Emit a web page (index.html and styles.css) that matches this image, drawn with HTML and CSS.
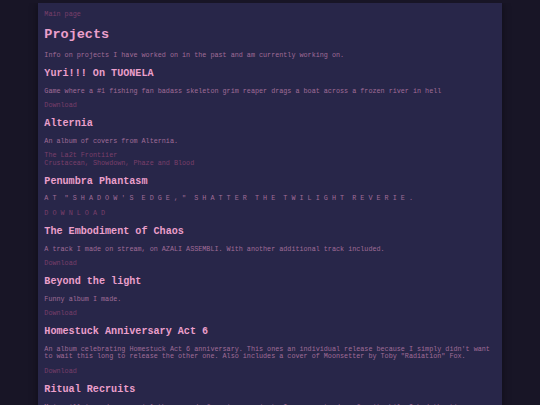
FILE: index.html
```html
<!DOCTYPE html>
<html lang="en">

<head>
    <meta charset="UTF-8">
    <meta name="viewport" content="width=device-width, initial-scale=1.0">
    <title>Projects</title>
    <link rel="stylesheet" href="styles.css">
</head>

<body>
    <main class="container">
        <a href="#">Main page</a>
        <h1>Projects</h1>
        <p>Info on projects I have worked on in the past and am currently working on.</p>

        <h2>Yuri!!! On TUONELA</h2>
        <p>Game where a #1 fishing fan badass skeleton grim reaper drags a boat across a frozen river in hell</p>
        <p><a href="#">Download</a></p>

        <h2>Alternia</h2>
        <p>An album of covers from Alternia.</p>
        <p>
            <a href="#">The La2t Frontiier</a><br>
            <a href="#">Crustacean, Showdown, Phaze and Blood</a>
        </p>

        <h2>Penumbra Phantasm</h2>
        <p class="spaced">A T  " S H A D O W ' S  E D G E , "  S H A T T E R  T H E  T W I L I G H T  R E V E R I E .</p>
        <p class="spaced"><a href="#">D O W N L O A D</a></p>

        <h2>The Embodiment of Chaos</h2>
        <p>A track I made on stream, on AZALI ASSEMBLI. With another additional track included.</p>
        <p><a href="#">Download</a></p>

        <h2>Beyond the light</h2>
        <p>Funny album I made.</p>
        <p><a href="#">Download</a></p>

        <h2>Homestuck Anniversary Act 6</h2>
        <p>An album celebrating Homestuck Act 6 anniversary. This ones an individual release because I simply didn't want to wait this long to release the other one. Also includes a cover of Moonsetter by Toby "Radiation" Fox.</p>
        <p><a href="#">Download</a></p>

        <h2>Ritual Recruits</h2>
        <p>Main villain and commercial themes made for given project. Improvements done for it while I had the time.</p>
    </main>
</body>

</html>
```

FILE: styles.css
```css
html {
    height: 100%;
    overflow: hidden;
    font-size: 6.75px;
}

body {
    margin: 3.375px 0 0;
    background-color: #181526;
    color: #a06c97;
    font-family: "Liberation Mono", "Courier New", monospace;
    font-size: 1rem;
    line-height: 7.6px;
}

.container {
    box-sizing: border-box;
    width: 464px;
    margin: 0 auto;
    padding: 7.4px 6.33px;
    background-color: #282649;
    box-shadow: 0 0 8px rgba(0, 0, 0, 0.4);
}

h1,
h2 {
    color: #eb9fcb;
    line-height: 1.13;
}

h1 {
    margin: 9.05px 0;
    font-size: 2rem;
}

h2 {
    margin: 8.4px 0;
    font-size: 1.5rem;
}

p {
    margin: 1rem 0;
}

a {
    color: #7a3f69;
    text-decoration: none;
}

.spaced {
    white-space: pre;
}
```
